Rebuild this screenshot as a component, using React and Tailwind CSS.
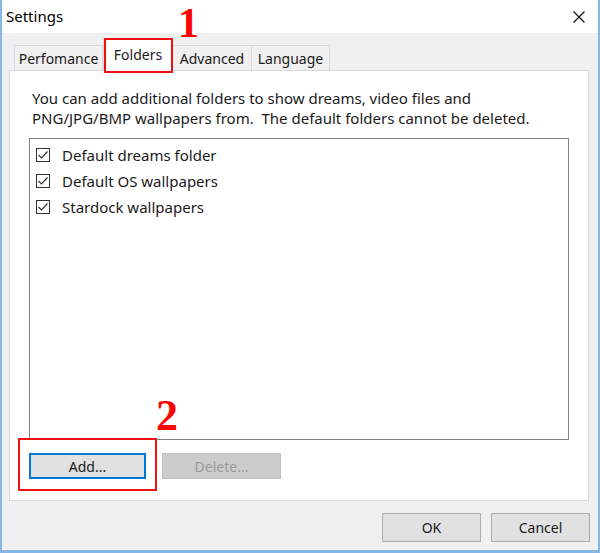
import { useState } from 'react';

const tabs = [
  { name: 'Perfomance', w: 'w-[89px]' },
  { name: 'Folders', w: 'w-[70px]' },
  { name: 'Advanced', w: 'w-[80px]' },
  { name: 'Language', w: 'w-[79px]' },
];

const folders = ['Default dreams folder', 'Default OS wallpapers', 'Stardock wallpapers'];

function CheckBox({ checked }) {
  return (
    <span className="w-[14px] h-[14px] border border-[#333333] bg-white flex items-center justify-center shrink-0">
      {checked && (
        <svg width="12" height="12" viewBox="0 0 12 12">
          <polyline points="1.5,6 4.5,9 10.5,2.5" fill="none" stroke="#333333" strokeWidth="1.2" />
        </svg>
      )}
    </span>
  );
}

export default function App() {
  const [active, setActive] = useState('Folders');

  return (
    <div
      className="relative w-[600px] h-[553px] flex flex-col bg-[#f0f0f0] border-x-2 border-b-[3px] border-[#86b7e6] text-[#1a1a1a]"
      style={{ fontFamily: '"Noto Sans", "Open Sans", sans-serif' }}
    >
      {/* Title bar */}
      <div className="h-[33px] bg-white flex items-center justify-between pl-[4px] pr-[13px] shrink-0">
        <span className="text-[15px] text-black">Settings</span>
        <svg width="12" height="12" viewBox="0 0 12 12">
          <path d="M0.5 0.5 L11.5 11.5 M11.5 0.5 L0.5 11.5" stroke="#111" strokeWidth="1.2" />
        </svg>
      </div>

      <div className="flex-1 flex flex-col pl-[7px] pr-[9px] pt-[7px]">
        {/* Tabs */}
        <div className="flex items-end h-[30px] pl-[5px] text-[14px]">
          {tabs.map(t => (
            t.name === active ? (
              <button
                key={t.name}
                onClick={() => setActive(t.name)}
                className={`${t.w} h-[32px] -mb-px bg-white border border-b-0 border-[#d9d9d9] relative z-10 flex items-center justify-center pb-[3px]`}
              >
                {t.name}
              </button>
            ) : (
              <button
                key={t.name}
                onClick={() => setActive(t.name)}
                className={`${t.w} h-[25px] bg-[#f0f0f0] border border-b-0 border-[#d9d9d9] -ml-px first:ml-0 flex items-center justify-center`}
              >
                {t.name}
              </button>
            )
          ))}
        </div>

        {/* Tab pane */}
        <div className="h-[431px] bg-white border border-[#d9d9d9] flex flex-col px-[19px] pt-[17px]">
          <p className="text-[15px] leading-[20px] pl-[3px] text-[#1a1a1a] whitespace-nowrap">
            You can add additional folders to show dreams, video files and
            <br />
            PNG/JPG/BMP wallpapers from.&nbsp; The default folders cannot be deleted.
          </p>

          <div className="mt-[10px] h-[302px] border border-[#828282] bg-white pt-[3px] pl-[6px]">
            {folders.map(f => (
              <div key={f} className="h-[26px] flex items-center gap-[12px] text-[15px]">
                <CheckBox checked />
                <span>{f}</span>
              </div>
            ))}
          </div>

          <div className="mt-[13px] flex gap-[16px] text-[14px]">
            <button className="w-[117px] h-[26px] bg-[#e1e1e1] border-2 border-[#0078d7]">Add...</button>
            <button className="w-[119px] h-[26px] bg-[#cccccc] border border-[#bfbfbf] text-[#9a9a9a]">Delete...</button>
          </div>
        </div>

        {/* Dialog buttons */}
        <div className="mt-[12px] flex justify-end gap-[10px] -mr-[1px] text-[14px]">
          <button className="w-[99px] h-[29px] bg-[#e1e1e1] border border-[#adadad]">OK</button>
          <button className="w-[99px] h-[29px] bg-[#e1e1e1] border border-[#adadad]">Cancel</button>
        </div>
      </div>

      {/* Annotations */}
      <div className="absolute left-[102px] top-[38px] w-[69px] h-[35px] border-2 border-[#ee1111] z-20 pointer-events-none" />
      <span
        className="absolute left-[176px] top-[3px] text-[42px] leading-[40px] font-bold text-[#ff0000] z-20"
        style={{ fontFamily: '"Liberation Serif", serif' }}
      >
        1
      </span>
      <div className="absolute left-[16px] top-[438px] w-[139px] h-[53px] border-2 border-[#ee1111] z-20 pointer-events-none" />
      <span
        className="absolute left-[154px] top-[394px] text-[44px] leading-none font-bold text-[#ff0000] z-20"
        style={{ fontFamily: '"Liberation Serif", serif' }}
      >
        2
      </span>
    </div>
  );
}
